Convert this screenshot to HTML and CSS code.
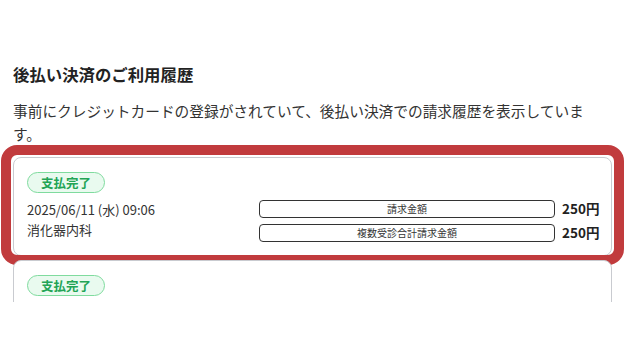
FILE: index.html
```html
<!DOCTYPE html>
<html lang="ja">
<head>
<meta charset="utf-8">
<link rel="stylesheet" href="styles.css">
</head>
<body>
<div class="page">
  <h2 class="title">後払い決済のご利用履歴</h2>
  <p class="lead">事前にクレジットカードの登録がされていて、後払い決済での請求履歴を表示しています。</p>
  <div class="list">
    <div class="card">
      <span class="badge">支払完了</span>
      <div class="body">
        <div class="info">
          <div>2025/06/11 (水) 09:06</div>
          <div>消化器内科</div>
        </div>
        <div class="label">請求金額</div>
        <div class="amount">250円</div>
        <div class="label">複数受診合計請求金額</div>
        <div class="amount">250円</div>
      </div>
      <div class="highlight"></div>
    </div>
    <div class="card card-peek">
      <span class="badge">支払完了</span>
    </div>
  </div>
</div>
</body>
</html>
```

FILE: styles.css
```css
html, body {
  margin: 0;
  padding: 0;
  background: #fff;
}
body {
  font-family: "Noto Sans CJK JP", "Noto Sans", sans-serif;
  color: #333;
}
.page {
  height: 302px;
  overflow: hidden;
  padding: 0 18px 0 13px;
  box-sizing: border-box;
  width: 630px;
}
.title {
  margin: 0;
  padding-top: 62px;
  font-size: 16.4px;
  line-height: 24px;
  font-weight: 700;
  color: #222;
}
.lead {
  margin: 12.5px 0 0;
  font-size: 14.7px;
  line-height: 23.5px;
  color: #333;
  width: 585px;
}
.list {
  margin-top: 11.5px;
  display: flex;
  flex-direction: column;
  gap: 4px;
}
.card {
  position: relative;
  display: flex;
  flex-direction: column;
  align-items: flex-start;
  border: 1px solid #c9cbd0;
  border-radius: 8px;
  padding: 14px 13px 13px 13px;
  background: #fff;
}
.card-peek {
  min-height: 80px;
}
.badge {
  display: block;
  height: 19px;
  line-height: 19px;
  padding: 0 13px;
  border: 1px solid #7fdb9e;
  border-radius: 11px;
  background: #e9faef;
  color: #22a455;
  font-size: 12.5px;
  font-weight: 700;
}
.body {
  align-self: stretch;
  margin-top: 6px;
  display: grid;
  grid-template-columns: 225px 1fr 36px;
  column-gap: 7px;
  row-gap: 5px;
  align-items: center;
}
.info {
  grid-row: span 2;
  align-self: start;
  font-size: 13px;
  line-height: 20px;
  color: #333;
  margin-top: 1px;
}
.label {
  height: 16px;
  line-height: 16px;
  border: 1.5px solid #333;
  border-radius: 4px;
  text-align: center;
  font-size: 10px;
  color: #333;
}
.amount {
  font-size: 13.5px;
  font-weight: 700;
  color: #222;
  line-height: 19px;
  white-space: nowrap;
}
.highlight {
  position: absolute;
  top: -13px;
  left: -13px;
  right: -13px;
  bottom: -10px;
  border: 10px solid #c13b3d;
  border-radius: 16px;
  pointer-events: none;
}
```
